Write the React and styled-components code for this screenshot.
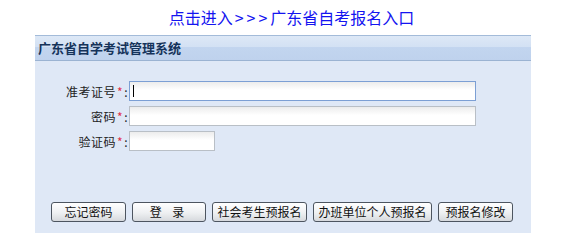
import React from 'react';
import styled, { createGlobalStyle } from 'styled-components';

const GlobalStyle = createGlobalStyle`
  html, body {
    margin: 0;
    padding: 0;
    background: #ffffff;
    font-family: "Noto Sans CJK SC", "Noto Sans", sans-serif;
  }
`;

const Page = styled.div`
  width: 585px;
  height: 251px;
  display: flex;
  flex-direction: column;
`;

const TopLink = styled.a`
  display: block;
  height: 35px;
  line-height: 34px;
  text-align: center;
  font-size: 16px;
  color: #1414f0;
  text-decoration: none;
  padding-right: 2px;
`;

const Arrows = styled.span`
  letter-spacing: 3px;
  padding-left: 2px;
`;

const Panel = styled.div`
  width: 496px;
  margin-left: 35px;
  height: 198px;
  background: #dfe8f6;
  display: flex;
  flex-direction: column;
`;

const PanelHeader = styled.div`
  height: 24px;
  border-top: 1px solid #a3bbd9;
  border-bottom: 1px solid #9bb3d2;
  background: linear-gradient(to bottom, #dde8f6 0%, #d3e1f4 45%, #c2d5ef 48%, #bfd2ed 100%);
  padding-left: 3px;
  font-size: 13px;
  font-weight: bold;
  line-height: 23px;
  color: #15335a;
`;

const Form = styled.div`
  display: flex;
  flex-direction: column;
  gap: 5px;
  padding-top: 20px;
`;

const Row = styled.div`
  display: flex;
  align-items: center;
  height: 20px;
`;

const Label = styled.label`
  width: 93px;
  text-align: right;
  font-size: 12px;
  letter-spacing: 0.5px;
  color: #222;
  padding-right: 1px;
`;

const Star = styled.span`
  color: #e0304a;
  padding: 0 1px;
`;

const Input = styled.div`
  box-sizing: border-box;
  width: ${p => p.$w}px;
  height: 20px;
  border: 1px solid ${p => (p.$focus ? '#7c9fd4' : '#b9bfc6')};
  background: linear-gradient(to bottom, #ececec 0%, #ffffff 45%, #ffffff 100%);
  position: relative;
`;

const Caret = styled.span`
  position: absolute;
  left: 3px;
  top: 3px;
  width: 1px;
  height: 12px;
  background: #000;
`;

const ButtonBar = styled.div`
  display: flex;
  gap: 6px;
  margin-top: auto;
  margin-bottom: 11px;
  padding-left: 16px;
`;

const Button = styled.button`
  box-sizing: border-box;
  height: 20px;
  width: ${p => p.$w}px;
  padding: 0;
  border: 1px solid #4d5560;
  border-radius: 3px;
  background: linear-gradient(to bottom, #ffffff 0%, #eef0f2 55%, #d6d9dd 100%);
  font-family: "Noto Sans CJK SC", sans-serif;
  font-size: 12px;
  color: #111;
  letter-spacing: ${p => p.$ls || 0}px;
  line-height: 18px;
`;

export default function App() {
  return (
    <>
      <GlobalStyle />
      <Page>
        <TopLink href="#">点击进入<Arrows>&gt;&gt;&gt;</Arrows>广东省自考报名入口</TopLink>
        <Panel>
          <PanelHeader>广东省自学考试管理系统</PanelHeader>
          <Form>
            <Row>
              <Label>准考证号<Star>*</Star>:</Label>
              <Input $w={347} $focus><Caret /></Input>
            </Row>
            <Row>
              <Label>密码<Star>*</Star>:</Label>
              <Input $w={347} />
            </Row>
            <Row>
              <Label>验证码<Star>*</Star>:</Label>
              <Input $w={86} />
            </Row>
          </Form>
          <ButtonBar>
            <Button $w={75}>忘记密码</Button>
            <Button $w={74} $ls={4}>登 录</Button>
            <Button $w={95}>社会考生预报名</Button>
            <Button $w={119}>办班单位个人预报名</Button>
            <Button $w={75}>预报名修改</Button>
          </ButtonBar>
        </Panel>
      </Page>
    </>
  );
}
